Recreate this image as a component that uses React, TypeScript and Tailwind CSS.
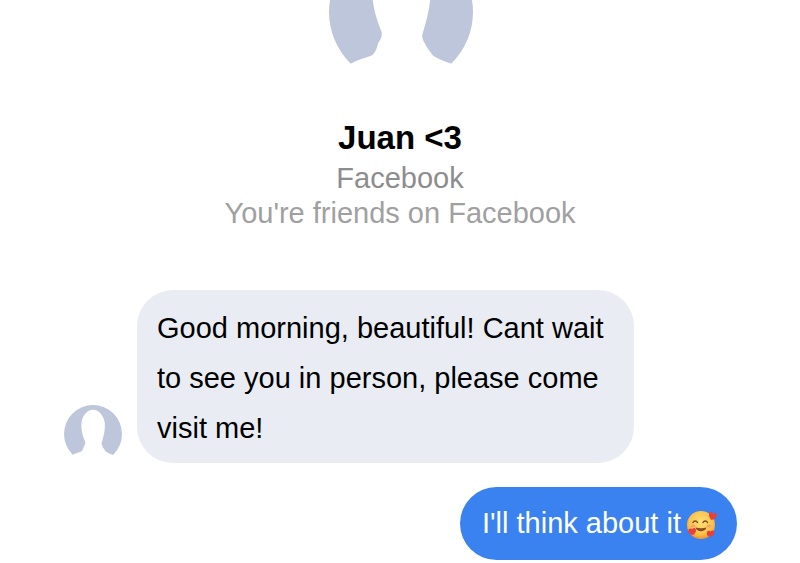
function Avatar({ className }: { className: string }) {
  return (
    <svg viewBox="0 0 100 100" className={className}>
      <circle cx="50" cy="50" r="50" fill="#bdc6da" />
      <path
        d="M50 8C40 8 31 18 30 32C29.5 45 33 55 36.6 64C37 68 35 70 34 72C33 76 32 78 30 80C25 82 20 83 15 86L0 100H100L85 86C80 84 76 83 72 80C70 77 68 75 66.7 72C65 69 64 67 65.3 64C68 55 71 45 70.5 32C69 18 60 8 50 8Z"
        fill="#ffffff"
      />
    </svg>
  )
}

// smiling face with hearts
function HeartsEmoji() {
  return (
    <svg viewBox="0 0 32 32" className="w-8 h-8 shrink-0 mt-[3px]">
      <defs>
        <radialGradient id="face" cx="50%" cy="40%" r="60%">
          <stop offset="0%" stopColor="#ffe27a" />
          <stop offset="70%" stopColor="#fbc24a" />
          <stop offset="100%" stopColor="#ee9336" />
        </radialGradient>
      </defs>
      <circle cx="15" cy="16" r="14" fill="url(#face)" />
      <path d="M7 13.5C8 11.5 10.5 11.5 11.5 13.5" fill="none" stroke="#7a4a22" strokeWidth="1.4" strokeLinecap="round" />
      <path d="M17 13.5C18 11.5 20.5 11.5 21.5 13.5" fill="none" stroke="#7a4a22" strokeWidth="1.4" strokeLinecap="round" />
      <path d="M9.5 18.5C11 23.5 19 23.5 20.5 18.5C17 19.5 13 19.5 9.5 18.5Z" fill="#8a4b22" />
      <ellipse cx="7" cy="17" rx="2.6" ry="1.6" fill="#f7936b" opacity="0.7" />
      <ellipse cx="23" cy="17" rx="2.6" ry="1.6" fill="#f7936b" opacity="0.7" />
      <path d="M25.5 11C22 7.5 22.5 3 25 3C26.3 3 27 4 27.3 5C28 4 29.3 3.8 30.3 4.6C32 6.3 30.5 10 25.5 11Z" fill="#e8403a" />
      <path d="M6.5 26C3 25.5 1 22 3 20C4.2 19 5.5 19.4 6.2 20.2C6.8 19.1 8 18.6 9.3 19.4C11 21 9.8 24.5 6.5 26Z" fill="#e8403a" />
      <path d="M24 28C20.5 27 20 23.5 21.7 22.2C23 21.4 24 21.8 24.6 22.6C25.3 21.5 26.5 21.1 27.8 21.9C29.4 23.4 27.8 26.8 24 28Z" fill="#e8403a" />
    </svg>
  )
}

export default function App() {
  return (
    <div className="h-[563px] w-[800px] overflow-hidden bg-white font-['Liberation_Sans',Arial,sans-serif]">
      {/* Profile header */}
      <div className="flex flex-col items-center">
        <Avatar className="w-36 h-36 -mt-[60px] ml-[2px]" />
        <h1 className="mt-[32px] text-[33px] leading-[44px] font-bold text-black">Juan &lt;3</h1>
        <p className="text-[29px] leading-[36px] text-[#8d8d8d]">Facebook</p>
        <p className="text-[29px] leading-[35px] text-[#a0a0a0]">You're friends on Facebook</p>
      </div>

      {/* Messages */}
      <div className="mt-[59px] flex items-end pl-[64px]">
        <Avatar className="w-[58px] h-[58px] shrink-0" />
        <div className="ml-[15px] w-[497px] h-[173px] rounded-[36px] bg-[#e9edf3] pl-[20px] pt-[13px] text-[29px] leading-[50px] text-black">
          <p>Good morning, beautiful! Cant wait</p>
          <p>to see you in person, please come</p>
          <p>visit me!</p>
        </div>
      </div>
      <div className="mt-6 flex justify-end pr-[63px]">
        <div className="flex items-center gap-[5px] h-[73px] w-[277px] rounded-[37px] bg-[#3a82f0] pl-[22px] text-[29px] text-white">
          <span>I'll think about it</span>
          <HeartsEmoji />
        </div>
      </div>
    </div>
  )
}
